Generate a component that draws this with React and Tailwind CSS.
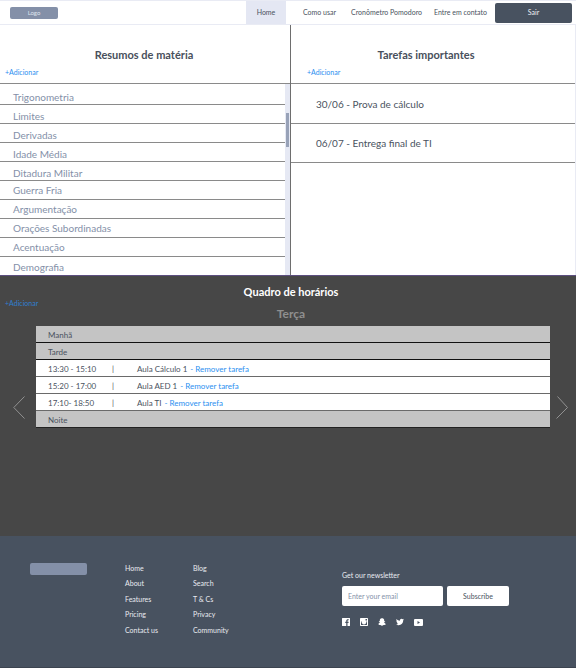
import React from "react";
import { FaSnapchatGhost, FaTwitter } from "react-icons/fa";

const subjects = [
  "Trigonometria",
  "Limites",
  "Derivadas",
  "Idade Média",
  "Ditadura Militar",
  "Guerra Fria",
  "Argumentação",
  "Orações Subordinadas",
  "Acentuação",
  "Demografia",
];

const tasks = ["30/06 - Prova de cálculo", "06/07 - Entrega final de TI"];

const classes = [
  { time: "13:30 - 15:10", name: "Aula Cálculo 1" },
  { time: "15:20 - 17:00", name: "Aula AED 1" },
  { time: "17:10- 18:50", name: "Aula TI" },
];

const footerLinks = [
  ["Home", "About", "Features", "Pricing", "Contact us"],
  ["Blog", "Search", "T & Cs", "Privacy", "Community"],
];

function FacebookIcon() {
  return (
    <svg viewBox="0 0 16 16" className="size-2" fill="currentColor">
      <path d="M1 0h14a1 1 0 0 1 1 1v14a1 1 0 0 1-1 1h-4v-6h2l.4-2.5H11V6c0-.8.3-1.3 1.300-1.300h1.200V2.500c-.3 0-1-.1-1.800-.1C9.700 2.400 8.500 3.500 8.500 5.600v1.900h-2V10h2v6H1a1 1 0 0 1-1-1V1a1 1 0 0 1 1-1z" />
    </svg>
  );
}

function InstagramIcon() {
  return (
    <svg viewBox="0 0 16 16" className="size-2" fill="currentColor">
      <path
        fillRule="evenodd"
        d="M1.500 0h13A1.500 1.500 0 0 1 16 1.500v13a1.500 1.500 0 0 1-1.500 1.500h-13A1.500 1.500 0 0 1 0 14.500v-13A1.500 1.500 0 0 1 1.500 0zM11 2v3h3V2zM2 7v7h12V7h-1.500a4.700 4.700 0 1 1-9 0z"
      />
      <circle cx="8" cy="8" r="2.600" />
    </svg>
  );
}

function YoutubeIcon() {
  return (
    <svg viewBox="0 0 18 14" className="h-[7px] w-[9px]" fill="currentColor">
      <path fillRule="evenodd" d="M2 0h14a2 2 0 0 1 2 2v10a2 2 0 0 1-2 2H2a2 2 0 0 1-2-2V2a2 2 0 0 1 2-2zM7 4v6l5-3z" />
    </svg>
  );
}

function Header() {
  return (
    <header className="flex h-[25px] items-stretch border-y border-[#e9ebf4] bg-white text-[7px] text-[#4a5260]">
      <a
        href="#logo"
        className="ml-[10px] flex h-3 w-12 items-center justify-center self-center rounded-xs bg-[#8490a8] text-[6px] text-[#dfe4ee]"
      >
        Logo
      </a>
      <nav className="ml-auto flex items-stretch">
        <a href="#home" className="flex w-10 items-center justify-center bg-[#e4e7f3]">Home</a>
        <a href="#como" className="ml-[17px] flex items-center">Como usar</a>
        <a href="#pomodoro" className="ml-[15px] flex items-center">Cronômetro Pomodoro</a>
        <a href="#contato" className="ml-3 flex items-center">Entre em contato</a>
      </nav>
      <button className="mr-1 ml-2 h-5 w-[77px] self-center rounded-xs bg-[#485260] text-[#eef0f4]">Sair</button>
    </header>
  );
}

function PanelHead({ title, className }) {
  return (
    <div className={"h-[59px] border-b border-[#8a8a8a] pt-[22px] " + className}>
      <h2 className="text-center text-[11px] leading-4 font-bold text-[#48505c]">{title}</h2>
      <a href="#adicionar" className="mt-1 block w-fit text-[7px] leading-[10px] text-[#2b8ff0]">+Adicionar</a>
    </div>
  );
}

function Subjects() {
  return (
    <section className="border-r border-[#6e6e6e]">
      <PanelHead title="Resumos de matéria" className="pr-[7px] pl-[5px]" />
      <div className="flex h-[191px]">
        <ul className="flex-1 pt-0.5 text-[10px] leading-[14px] text-[#8490a8]">
          {subjects.map((s, i) => (
            <li
              key={s}
              className={
                "flex h-[19px] border-[#8a8a8a] pl-[13px] not-last:border-b " + (i < 5 ? "items-end" : "items-center")
              }
            >
              {s}
            </li>
          ))}
        </ul>
        <div className="w-[5px] bg-[#e6e9f4] px-px pt-[29px]">
          <div className="h-[34px] bg-[#98a2b8]" />
        </div>
      </div>
    </section>
  );
}

function Tasks() {
  return (
    <section className="border-r border-[#e9ebf4]">
      <PanelHead title="Tarefas importantes" className="pr-[30px] pl-4" />
      <ul className="pt-px text-[10px] text-[#4a5260]">
        {tasks.map((t) => (
          <li key={t} className="flex h-[39px] items-center border-b border-[#8a8a8a] pl-[25px]">
            {t}
          </li>
        ))}
      </ul>
    </section>
  );
}

function Schedule() {
  return (
    <section className="h-[261px] border-t border-[#5d4f80] bg-[#474747]">
      <div className="relative pt-2 pl-[6px] text-center">
        <h2 className="text-[11px] leading-4 font-bold text-white">Quadro de horários</h2>
        <a href="#adicionar" className="absolute top-[22px] left-[5px] text-[7px] leading-[10px] text-[#2f7fcf]">
          +Adicionar
        </a>
        <h3 className="mt-[6px] text-[12px] leading-4 font-bold text-[#8f8f8f]">Terça</h3>
      </div>
      <div className="mt-1 flex items-end">
        <button aria-label="Dia anterior" className="mb-[9px] flex w-9 justify-center pr-px pl-0.5">
          <svg viewBox="0 0 12 23" className="h-[23px] w-3" fill="none" stroke="#929292">
            <path d="M11.500 .5 .8 11.500l10.700 11" />
          </svg>
        </button>
        <table className="flex-1 text-left text-[8px] text-[#4a5260]">
          <tbody className="block">
            {["Manhã", "Tarde"].map((p) => (
              <tr key={p} className="flex h-[17px] items-center border-b border-[#111111] bg-[#c4c4c4] pt-px pl-3">
                <th className="font-normal">{p}</th>
              </tr>
            ))}
            {classes.map((c) => (
              <tr key={c.time} className="flex h-[17px] items-center border-b border-[#6a6a6a] bg-white pt-px pl-3">
                <td className="w-16">{c.time}</td>
                <td className="w-[25px]">|</td>
                <td className="flex gap-[3px]">
                  {c.name}
                  <a href="#remover" className="text-[#2b8ff0]">- Remover tarefa</a>
                </td>
              </tr>
            ))}
            <tr className="flex h-[17px] items-center border-b border-[#222222] bg-[#c4c4c4] pt-px pl-3">
              <th className="font-normal">Noite</th>
            </tr>
          </tbody>
        </table>
        <button aria-label="Próximo dia" className="mb-[9px] flex w-[26px] pl-[6px]">
          <svg viewBox="0 0 12 23" className="h-[23px] w-3" fill="none" stroke="#929292">
            <path d="M1.500 .5l10 11L.5 22.500" />
          </svg>
        </button>
      </div>
    </section>
  );
}

function Footer() {
  return (
    <footer className="flex h-[132px] border-b border-[#3c4450] bg-[#485260] pl-[30px] text-[7px] text-[#e8ebf0]">
      <div className="mt-[27px] h-3 w-[57px] rounded-xs bg-[#8490a8]" />
      <nav className="mt-6 ml-[38px] flex">
        {footerLinks.map((col) => (
          <ul key={col[0]} className="flex h-[78px] w-[68px] flex-col justify-between">
            {col.map((l) => (
              <li key={l} className="flex flex-1 items-center">
                <a href="#footer">{l}</a>
              </li>
            ))}
          </ul>
        ))}
      </nav>
      <form className="mt-[34px] ml-[81px]" onSubmit={(e) => e.preventDefault()}>
        <label htmlFor="email" className="block leading-[10px]">Get our newsletter</label>
        <div className="mt-[6px] flex gap-1">
          <input
            id="email"
            type="email"
            placeholder="Enter your email"
            className="h-5 w-[101px] rounded-xs bg-white px-[6px] text-[#4a5260] placeholder:text-[#8490a8]"
          />
          <button className="h-5 w-[62px] rounded-xs bg-white text-[#4a5260]">Subscribe</button>
        </div>
        <div className="mt-3 flex items-center gap-[10px] text-white">
          <a href="#facebook" aria-label="Facebook"><FacebookIcon /></a>
          <a href="#instagram" aria-label="Instagram"><InstagramIcon /></a>
          <a href="#snapchat" aria-label="Snapchat"><FaSnapchatGhost className="size-2" /></a>
          <a href="#twitter" aria-label="Twitter"><FaTwitter className="size-2" /></a>
          <a href="#youtube" aria-label="YouTube"><YoutubeIcon /></a>
        </div>
      </form>
    </footer>
  );
}

export default function App() {
  return (
    <div className="bg-white font-['Lato',sans-serif]">
      <Header />
      <main>
        <div className="grid grid-cols-[291fr_285fr]">
          <Subjects />
          <Tasks />
        </div>
        <Schedule />
      </main>
      <Footer />
    </div>
  );
}
